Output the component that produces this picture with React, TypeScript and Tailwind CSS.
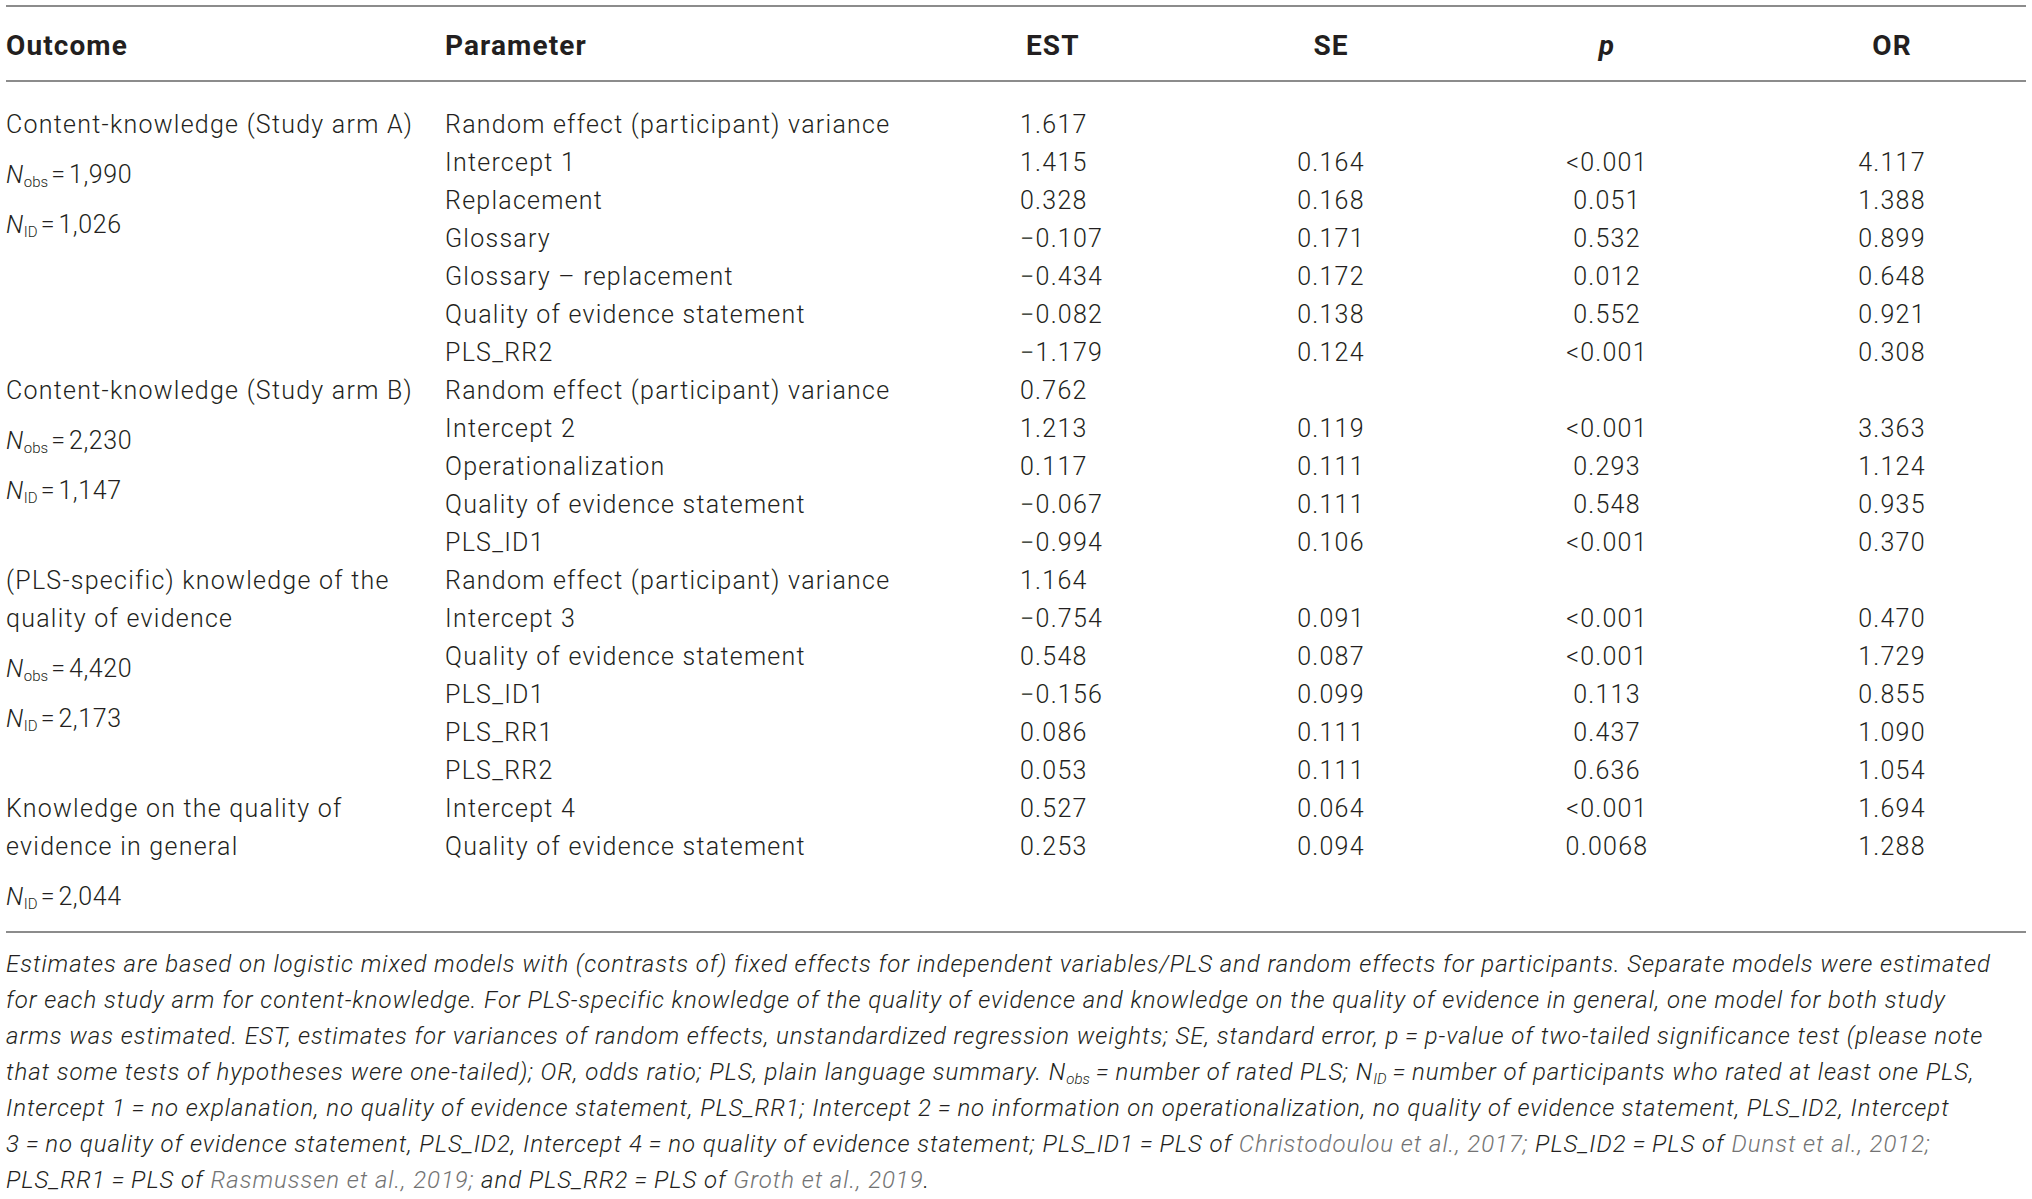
type Group = {
  outcome: string[];
  nobs?: string;
  nid: string;
  rows: string[][];
};

const groups: Group[] = [
  {
    outcome: ["Content-knowledge (Study arm A)"],
    nobs: "1,990",
    nid: "1,026",
    rows: [
      ["Random effect (participant) variance", "1.617", "", "", ""],
      ["Intercept 1", "1.415", "0.164", "<0.001", "4.117"],
      ["Replacement", "0.328", "0.168", "0.051", "1.388"],
      ["Glossary", "\u22120.107", "0.171", "0.532", "0.899"],
      ["Glossary \u2013 replacement", "\u22120.434", "0.172", "0.012", "0.648"],
      ["Quality of evidence statement", "\u22120.082", "0.138", "0.552", "0.921"],
      ["PLS_RR2", "\u22121.179", "0.124", "<0.001", "0.308"],
    ],
  },
  {
    outcome: ["Content-knowledge (Study arm B)"],
    nobs: "2,230",
    nid: "1,147",
    rows: [
      ["Random effect (participant) variance", "0.762", "", "", ""],
      ["Intercept 2", "1.213", "0.119", "<0.001", "3.363"],
      ["Operationalization", "0.117", "0.111", "0.293", "1.124"],
      ["Quality of evidence statement", "\u22120.067", "0.111", "0.548", "0.935"],
      ["PLS_ID1", "\u22120.994", "0.106", "<0.001", "0.370"],
    ],
  },
  {
    outcome: ["(PLS-specific) knowledge of the", "quality of evidence"],
    nobs: "4,420",
    nid: "2,173",
    rows: [
      ["Random effect (participant) variance", "1.164", "", "", ""],
      ["Intercept 3", "\u22120.754", "0.091", "<0.001", "0.470"],
      ["Quality of evidence statement", "0.548", "0.087", "<0.001", "1.729"],
      ["PLS_ID1", "\u22120.156", "0.099", "0.113", "0.855"],
      ["PLS_RR1", "0.086", "0.111", "0.437", "1.090"],
      ["PLS_RR2", "0.053", "0.111", "0.636", "1.054"],
    ],
  },
  {
    outcome: ["Knowledge on the quality of", "evidence in general"],
    nid: "2,044",
    rows: [
      ["Intercept 4", "0.527", "0.064", "<0.001", "1.694"],
      ["Quality of evidence statement", "0.253", "0.094", "0.0068", "1.288"],
    ],
  },
];

const eq = "\u2009=\u2009";
const eqTight = "\u200a=\u200a";

function NLine({ sub, value }: { sub: string; value: string }) {
  return (
    <div className="mt-[12px] leading-[38px] whitespace-nowrap tracking-[0.6px]">
      <i>N</i>
      <sub className="text-[15px] tracking-normal">{sub}</sub>
      {eqTight}
      {value}
    </div>
  );
}

function GroupBlock({ group }: { group: Group }) {
  return (
    <div className="flex">
      <div className="w-[439px] shrink-0">
        {group.outcome.map((line) => (
          <div key={line} className="leading-[38px] whitespace-nowrap">
            {line}
          </div>
        ))}
        {group.nobs && <NLine sub="obs" value={group.nobs} />}
        <NLine sub="ID" value={group.nid} />
      </div>
      <div className="flex-1">
        {group.rows.map((r, i) => (
          <div
            key={i}
            className="grid grid-cols-[575px_172px_278px_274px_282px] h-[38px] leading-[38px] whitespace-nowrap"
          >
            <div>{r[0]}</div>
            <div>{r[1]}</div>
            <div className="text-center">{r[2]}</div>
            <div className="text-center">{r[3]}</div>
            <div className="text-center pl-[14px]">{r[4]}</div>
          </div>
        ))}
      </div>
    </div>
  );
}

function Cite({ children }: { children: React.ReactNode }) {
  return <span className="text-[#737373]">{children}</span>;
}

export default function App() {
  return (
    <div className="w-[2032px] h-[1199px] bg-white text-[#231f20] font-['Roboto',sans-serif] font-light px-[6px] pt-[5px] overflow-hidden">
      {/* table */}
      <div className="border-t-2 border-b-2 border-[#8c8c8c]">
        <div className="grid grid-cols-[439px_575px_172px_278px_274px_282px] items-center h-[75px] pt-[5px] border-b-2 border-[#8c8c8c] text-[28px] font-bold tracking-[1.1px]">
          <div>Outcome</div>
          <div>Parameter</div>
          <div className="pl-[6px]">EST</div>
          <div className="text-center">SE</div>
          <div className="text-center italic">p</div>
          <div className="text-center pl-[14px]">OR</div>
        </div>
        <div className="pt-[24px] pb-[15px] text-[25px] tracking-[1.25px]">
          {groups.map((g, i) => (
            <GroupBlock key={i} group={g} />
          ))}
        </div>
      </div>

      {/* footnote */}
      <p className="mt-[13px] text-[24px] italic leading-[36px] tracking-[0.95px] whitespace-nowrap">
        Estimates are based on logistic mixed models with (contrasts of) fixed effects for independent variables/PLS and random effects for participants. Separate models were estimated
        <br />
        for each study arm for content-knowledge. For PLS-specific knowledge of the quality of evidence and knowledge on the quality of evidence in general, one model for both study
        <br />
        arms was estimated. EST, estimates for variances of random effects, unstandardized regression weights; SE, standard error, p{eq}p-value of two-tailed significance test (please note
        <br />
        that some tests of hypotheses were one-tailed); OR, odds ratio; PLS, plain language summary. N<sub className="text-[15px] tracking-normal">obs</sub>{eq}number of rated PLS; N<sub className="text-[15px] tracking-normal">ID</sub>{eq}number of participants who rated at least one PLS,
        <br />
        Intercept 1{eq}no explanation, no quality of evidence statement, PLS_RR1; Intercept 2{eq}no information on operationalization, no quality of evidence statement, PLS_ID2, Intercept
        <br />
        3{eq}no quality of evidence statement, PLS_ID2, Intercept 4{eq}no quality of evidence statement; PLS_ID1{eq}PLS of <Cite>Christodoulou et al., 2017;</Cite> PLS_ID2{eq}PLS of <Cite>Dunst et al., 2012;</Cite>
        <br />
        PLS_RR1{eq}PLS of <Cite>Rasmussen et al., 2019;</Cite> and PLS_RR2{eq}PLS of <Cite>Groth et al., 2019</Cite>.
      </p>
    </div>
  );
}
